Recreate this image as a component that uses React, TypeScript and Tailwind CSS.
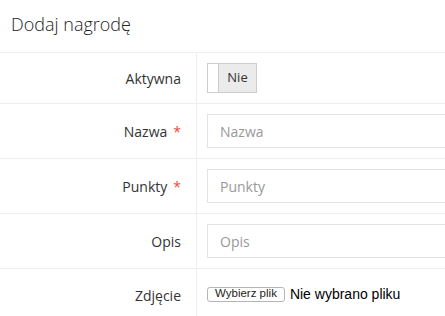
import React from 'react';

type Row = { label: string; required?: boolean; placeholder?: string };

const rows: Row[] = [
  { label: 'Nazwa', required: true, placeholder: 'Nazwa' },
  { label: 'Punkty', required: true, placeholder: 'Punkty' },
  { label: 'Opis', placeholder: 'Opis' },
];

const Label: React.FC<{ text: string; required?: boolean }> = ({ text, required }) => (
  <div className="w-[197px] shrink-0 border-r border-[#eeeeee] flex items-center justify-end pr-[15px] text-[14px] text-[#333333]">
    <span>{text}</span>
    {required && <span className="ml-[6px] text-[#e74c3c]">*</span>}
  </div>
);

export default function App() {
  return (
    <div className="w-[445px] h-[316px] overflow-hidden bg-white font-['Open_Sans',sans-serif] text-[#333333]">
      <div className="h-[52px] flex items-center pl-[11px] text-[18px] font-light text-[#222222] pb-[4px]">Dodaj nagrodę</div>

      <div className="flex h-[51px] border-t border-[#eeeeee]">
        <Label text="Aktywna" />
        <div className="flex items-center pl-[10px]">
          <div className="flex h-[30px] w-[50px] border border-[#cccccc] bg-[#ebebeb]">
            <div className="w-[11px] bg-white border-r border-[#cccccc]" />
            <div className="flex-1 flex items-center justify-center text-[13px] text-[#333333]">Nie</div>
          </div>
        </div>
      </div>

      {rows.map((r) => (
        <div key={r.label} className="flex h-[55px] border-t border-[#eeeeee]">
          <Label text={r.label} required={r.required} />
          <div className="flex items-center pl-[10px]">
            <input
              placeholder={r.placeholder}
              className="w-[280px] h-[34px] border border-[#e3e3e3] px-[12px] text-[14px] placeholder:text-[#999999] outline-none"
            />
          </div>
        </div>
      ))}

      <div className="flex h-[60px] border-t border-[#eeeeee]">
        <div className="w-[197px] shrink-0 border-r border-[#eeeeee] flex justify-end pr-[15px] pt-[16px] text-[14px]">Zdjęcie</div>
        <div className="flex items-center self-start pl-[10px] pt-[17px] gap-[5px] font-['Liberation_Sans',sans-serif]">
          <button className="h-[15px] px-[7px] border border-[#b5b5b5] rounded-[3px] bg-white text-[11.5px] leading-none text-[#222222]">
            Wybierz plik
          </button>
          <span className="text-[14px] leading-[16px] text-black">Nie wybrano pliku</span>
        </div>
      </div>
    </div>
  );
}
